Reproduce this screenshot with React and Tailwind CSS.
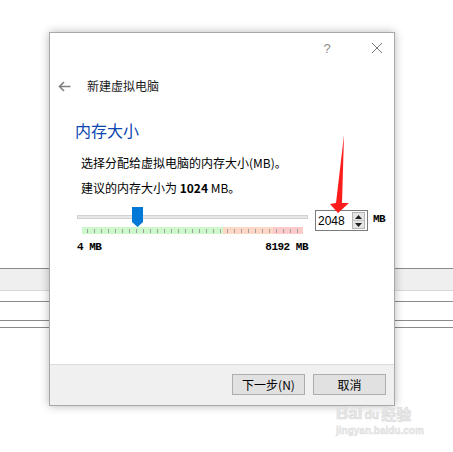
import React from 'react';

const ticks = Array.from({ length: 31 });

const App = () => {
  return (
    <div className="relative w-[453px] h-[452px] overflow-hidden bg-white" style={{ fontFamily: '"Noto Sans CJK SC", "Noto Sans", sans-serif' }}>
      {/* Page behind the dialog */}
      <div className="flex flex-col pt-[268px]">
        <div className="h-px bg-[#8a8a8a]" />
        <div className="h-[22px] bg-[#efefef] border-b border-[#d8d8d8]" />
        <div className="h-[10px]" />
        <div className="h-px bg-[#8a8a8a]" />
        <div className="h-[18px]" />
        <div className="h-px bg-[#8a8a8a]" />
        <div className="h-[6px]" />
        <div className="h-px bg-[#8a8a8a]" />
      </div>

      {/* Dialog window */}
      <div className="absolute left-[49px] top-[32px] w-[346px] h-[374px] flex flex-col bg-white border border-[#a8a8a8] shadow-[0_0_9px_rgba(0,0,0,0.28)]">
        {/* Title bar */}
        <div className="h-[30px] flex items-center justify-end pr-[11px] text-[#8c8c8c]">
          <span className="w-[30px] text-center text-[13px] leading-none" style={{ fontFamily: '"Liberation Sans", sans-serif' }}>?</span>
          <span className="w-[29px]" />
          <svg width="12" height="12" viewBox="0 0 12 12" className="block">
            <path d="M1 1 L11 11 M11 1 L1 11" stroke="#7a7a7a" strokeWidth="1" fill="none" />
          </svg>
        </div>

        {/* Header */}
        <div className="h-[46px] flex items-center pl-[8px]">
          <svg width="13" height="11" viewBox="0 0 13 11" className="block">
            <path d="M12.5 5.5 H2 M6 1 L1.5 5.5 L6 10" stroke="#808080" strokeWidth="1.6" fill="none" />
          </svg>
          <span className="ml-[16px] text-[12px] leading-[16px] text-[#1a1a1a]">新建虚拟电脑</span>
        </div>

        {/* Content */}
        <div className="flex-1 flex flex-col">
          <div className="pt-[11px] pl-[25px] text-[16px] leading-[20px] text-[#0a45b0]">内存大小</div>
          <div className="mt-[15px] pl-[31px] text-[12px] leading-[16px] text-black">选择分配给虚拟电脑的内存大小(MB)。</div>
          <div className="mt-[9px] pl-[31px] text-[12px] leading-[16px] text-black">
            建议的内存大小为 <span className="font-bold">1024</span> MB。
          </div>

          {/* Slider row */}
          <div className="mt-[11px] pl-[27px] flex items-start">
            <div className="w-[231px] flex flex-col">
              <div className="relative h-[20px]">
                <div className="absolute left-0 right-0 top-[8px] h-[4px] bg-[#e7e7e7] border border-[#d2d2d2]" />
                <svg width="11" height="20" viewBox="0 0 11 20" className="absolute left-[55px] top-0">
                  <polygon points="0,0 11,0 11,15 5.5,20 0,15" fill="#0078d7" />
                </svg>
              </div>
              <div className="ml-[5px] w-[221px] h-[7px] flex">
                <div className="w-[141px] h-full bg-[#ccf8cc]" />
                <div className="w-[50px] h-full bg-[#fdd8c6]" />
                <div className="w-[30px] h-full bg-[#ffcaca]" />
              </div>
              <div className="-mt-[7px] ml-[10px] h-[7px] flex items-center gap-[6px]">
                {ticks.map((_, i) => (
                  <div key={i} className="w-px h-[4px] bg-[#a0a0a0]" />
                ))}
              </div>
              <div className="mt-[6px] flex justify-between text-[11px] leading-[14px] text-black" style={{ fontFamily: '"Liberation Mono", monospace' }}>
                <span className="font-bold tracking-[-0.5px]">4 MB</span>
                <span className="font-bold tracking-[-0.5px]">8192 MB</span>
              </div>
            </div>

            <div className="ml-[7px] mt-[3px] w-[53px] h-[21px] border border-[#7a7a7a] bg-white flex items-center pl-[2px] pr-[2px]">
              <span className="flex-1 text-[12px] leading-none text-black" style={{ fontFamily: '"Liberation Sans", sans-serif' }}>2048</span>
              <div className="w-[13px] h-[17px] flex flex-col border border-[#b5b5b5] bg-[#e5e5e5]">
                <div className="flex-1 flex items-center justify-center border-b border-[#c4c4c4]">
                  <svg width="7" height="4" viewBox="0 0 7 4"><polygon points="0,4 7,4 3.5,0" fill="#222" /></svg>
                </div>
                <div className="flex-1 flex items-center justify-center">
                  <svg width="7" height="4" viewBox="0 0 7 4"><polygon points="0,0 7,0 3.5,4" fill="#222" /></svg>
                </div>
              </div>
            </div>
            <div className="ml-[5px] mt-[5px] text-[11px] leading-[14px] font-bold text-black tracking-[-0.5px]" style={{ fontFamily: '"Liberation Mono", monospace' }}>MB</div>
          </div>
        </div>

        {/* Footer */}
        <div className="h-[41px] bg-[#f0f0f0] border-t border-[#dcdcdc] flex justify-end items-start pt-[9px] pr-[8px] gap-[8px]">
          <button className="w-[73px] h-[21px] bg-[#e1e1e1] border border-[#adadad] text-[12px] leading-none text-black">下一步(N)</button>
          <button className="w-[73px] h-[21px] bg-[#e1e1e1] border border-[#adadad] text-[12px] leading-none text-black">取消</button>
        </div>
      </div>

      {/* Red annotation arrow */}
      <svg width="453" height="452" viewBox="0 0 453 452" className="absolute left-0 top-0 pointer-events-none">
        <polygon points="344,135 342,203 349,203 338,213 330,204 336,203" fill="#fd1c1c" />
      </svg>

      {/* Watermark */}
      <div className="absolute left-[336px] top-[404px] flex flex-col items-start text-[#e8e8e8]">
        <div className="flex items-end">
          <span className="text-[17px] leading-[20px] font-bold" style={{ fontFamily: '"Liberation Sans", sans-serif', WebkitTextStroke: '0.6px #d8d8d8' }}>Bai</span>
          <span className="ml-[2px] text-[12px] leading-[18px] font-bold" style={{ fontFamily: '"Liberation Sans", sans-serif', WebkitTextStroke: '0.5px #d8d8d8' }}>du</span>
          <span className="ml-[2px] text-[15px] leading-[20px] font-bold" style={{ WebkitTextStroke: '0.5px #d8d8d8' }}>经验</span>
        </div>
        <span className="mt-[1px] text-[10px] leading-[12px] font-bold" style={{ fontFamily: '"Liberation Sans", sans-serif', WebkitTextStroke: '0.4px #dcdcdc' }}>jingyan.baidu.com</span>
      </div>
    </div>
  );
};

export default App;
